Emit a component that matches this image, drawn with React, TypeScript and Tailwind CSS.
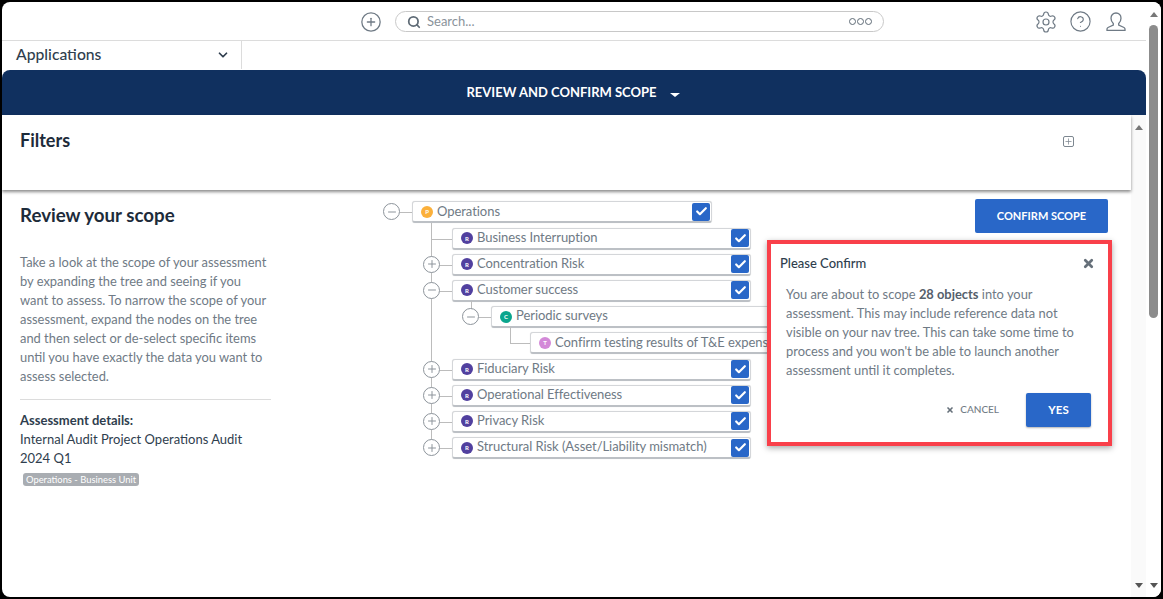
import { Search, Settings, CircleHelp, ChevronDown, Check, X, CirclePlus, Plus, Minus } from 'lucide-react';

type Node = {
  label: string;
  letter: string;
  color: string;
  depth: number;
  toggle?: 'plus' | 'minus';
  last?: boolean;
};

const nodes: Node[] = [
  { label: 'Operations', letter: 'P', color: 'bg-[#fbb03b]', depth: 0, toggle: 'minus' },
  { label: 'Business Interruption', letter: 'R', color: 'bg-[#51409f]', depth: 1 },
  { label: 'Concentration Risk', letter: 'R', color: 'bg-[#51409f]', depth: 1, toggle: 'plus' },
  { label: 'Customer success', letter: 'R', color: 'bg-[#51409f]', depth: 1, toggle: 'minus' },
  { label: 'Periodic surveys', letter: 'C', color: 'bg-[#0ba58d]', depth: 2, toggle: 'minus' },
  { label: 'Confirm testing results of T&E expenses', letter: 'T', color: 'bg-[#d389d8]', depth: 3 },
  { label: 'Fiduciary Risk', letter: 'R', color: 'bg-[#51409f]', depth: 1, toggle: 'plus' },
  { label: 'Operational Effectiveness', letter: 'R', color: 'bg-[#51409f]', depth: 1, toggle: 'plus' },
  { label: 'Privacy Risk', letter: 'R', color: 'bg-[#51409f]', depth: 1, toggle: 'plus' },
  { label: 'Structural Risk (Asset/Liability mismatch)', letter: 'R', color: 'bg-[#51409f]', depth: 1, toggle: 'plus', last: true },
];

const depthPad = ['pl-0', 'pl-[40px]', 'pl-[79px]', 'pl-[118px]'];
const togglePos = ['left-[-29px]', 'left-[11px]', 'left-[50px]', 'left-[89px]'];
const stubPos = ['left-[-12px]', 'left-[28px]', 'left-[67px]', 'left-[106px]'];

const TreeRow = ({ node }: { node: Node }) => (
  <div className={`relative flex h-[22px] ${depthPad[node.depth]}`}>
    {/* connector lines */}
    {node.depth >= 1 && (
      <span className={`absolute left-[19px] top-[-5px] w-px bg-[#bcbcbc] ${node.last ? 'h-[16px]' : 'h-[31px]'}`} />
    )}
    {node.depth === 2 && <span className="absolute left-[59px] top-[-5px] h-[8px] w-px bg-[#bcbcbc]" />}
    {node.depth === 3 && (
      <span className="absolute left-[98px] top-[-5px] h-[17px] w-[20px] border-b border-l border-[#bcbcbc]" />
    )}
    {node.depth === 1 && !node.toggle && (
      <span className="absolute left-[19px] top-[11px] h-px w-[21px] bg-[#bcbcbc]" />
    )}
    {node.toggle && (
      <>
        <span className={`absolute top-[11px] h-px w-[12px] bg-[#bcbcbc] ${stubPos[node.depth]}`} />
        <span
          className={`absolute top-[2px] flex h-[17px] w-[17px] items-center justify-center rounded-full border-[1.5px] border-[#8d949b] bg-white text-[#8d949b] ${togglePos[node.depth]}`}
        >
          {node.toggle === 'plus' ? <Plus size={12} strokeWidth={2} /> : <Minus size={12} strokeWidth={2} />}
        </span>
      </>
    )}
    <div
      className={`relative flex h-[22px] shrink-0 items-center rounded-[3px] border border-b-2 border-[#d4d6d9] border-b-[#bcc0c5] bg-white pl-[8px] pr-px shadow-[0_0_1px_rgba(0,0,0,0.15)] ${
        node.depth === 0 ? 'w-[300px]' : 'w-[299px]'
      }`}
    >
      <span className={`mr-[4px] flex h-[12px] w-[12px] shrink-0 items-center justify-center rounded-full text-[6px] font-bold text-white ${node.color}`}>
        {node.letter}
      </span>
      <span className="flex-1 overflow-hidden whitespace-nowrap pb-px text-[13px] tracking-[-0.05px] text-[#6f7a85]">{node.label}</span>
      <span className="ml-1 flex h-[18px] w-[18px] shrink-0 items-center justify-center rounded-[2px] bg-[#2967c8] text-white">
        <Check size={13} strokeWidth={4} />
      </span>
    </div>
  </div>
);

const ArrowUp = ({ className = '' }: { className?: string }) => (
  <span className={`h-0 w-0 border-x-[4px] border-b-[5px] border-x-transparent border-b-[#777] ${className}`} />
);

const ArrowDown = ({ className = '' }: { className?: string }) => (
  <span className={`h-0 w-0 border-x-[4px] border-t-[5px] border-x-transparent border-t-[#555] ${className}`} />
);

const UserIcon = () => (
  <svg width="20" height="20" viewBox="0 0 20 20" fill="none" stroke="#6f7a85" strokeWidth="1.3">
    <path d="M10 1c3 0 5 2.200 5 5.200 0 2.300-1 4-2.300 5.300v1.500l5.300 2.500c.7.400 1 1 1 1.500v1.300H1v-1.300c0-.5.300-1.100 1-1.500L7.300 13v-1.500C6 10.200 5 8.500 5 6.200 5 3.200 7 1 10 1z" />
  </svg>
);

export default function App() {
  return (
    <div className="h-[599px] w-[1163px] overflow-hidden bg-black p-[2px] font-['Lato','Liberation_Sans',sans-serif]">
      <div className="flex h-[595px] overflow-hidden rounded-[8px] bg-white">
        <div className="flex min-w-0 flex-1 flex-col">
          {/* Top bar */}
          <header className="flex h-[39px] shrink-0 items-center border-b border-[#dcdcdc] pl-[358px] pt-[1px]">
            <CirclePlus size={22} strokeWidth={1.4} className="text-[#6f7a85]" />
            <div className="ml-[13px] flex h-[21px] w-[489px] items-center rounded-full border border-[#c8c8c8] pl-[11px] pr-[11px]">
              <Search size={14} strokeWidth={3} className="text-[#5f6b76]" />
              <span className="ml-[6px] flex-1 text-[13px] text-[#8a939b]">Search...</span>
              <span className="flex gap-px">
                <span className="h-[7px] w-[7px] rounded-full border border-[#5f6b76]" />
                <span className="h-[7px] w-[7px] rounded-full border border-[#5f6b76]" />
                <span className="h-[7px] w-[7px] rounded-full border border-[#5f6b76]" />
              </span>
            </div>
            <div className="ml-[150px] flex items-center gap-[11px]">
              <Settings size={24} strokeWidth={1.2} className="text-[#6f7a85]" />
              <CircleHelp size={23} strokeWidth={1.2} className="text-[#6f7a85]" />
              <span className="ml-[3px]"><UserIcon /></span>
            </div>
          </header>

          {/* Applications */}
          <div className="h-[29px] shrink-0">
            <div className="flex h-[28px] w-[240px] items-center justify-between border-r border-[#dcdcdc] pl-[14px] pr-[11px]">
              <span className="text-[15.7px] font-medium text-[#2f3e4e]">Applications</span>
              <ChevronDown size={14} strokeWidth={3} className="text-[#2f3e4e]" />
            </div>
          </div>

          {/* Nav band */}
          <div className="flex h-[45px] shrink-0 items-center justify-center gap-[13px] rounded-t-[8px] bg-[#10305f] pr-[2px]">
            <span className="text-[13px] font-bold text-white">REVIEW AND CONFIRM SCOPE</span>
            <span className="mt-[5px] h-0 w-0 border-x-[5px] border-t-[4px] border-x-transparent border-t-white" />
          </div>

          {/* Body */}
          <div className="flex min-h-0 flex-1">
            <div className="relative min-w-0 flex-1">
              <section className="relative z-10 flex h-[75px] justify-between bg-white pl-[18px] pr-[57px] pt-[15px] shadow-[0_2px_3px_rgba(0,0,0,0.45)]">
                <h2 className="text-[18px] font-bold leading-[21px] text-[#1d2b3a]">Filters</h2>
                <span className="mt-[6px] flex h-[11px] w-[11px] items-center justify-center rounded-[2px] border border-[#7d8790] text-[#7d8790]">
                  <Plus size={9} strokeWidth={2} />
                </span>
              </section>

              <div className="flex pl-[18px] pt-[11px]">
                {/* Left column */}
                <div className="w-[251px] shrink-0">
                  <h2 className="pt-[2px] text-[18.7px] font-bold leading-[24px] text-[#1d2b3a]">Review your scope</h2>
                  <p className="mt-[26px] text-[12.9px] leading-[19px] text-[#6f7a85]">
                    Take a look at the scope of your assessment by expanding the tree and seeing if you want to assess. To narrow the scope of your assessment, expand the nodes on the tree and then select or de-select specific items until you have exactly the data you want to assess selected.
                  </p>
                  <div className="mt-[13px] border-t border-[#dcdcdc] pt-[11px] text-[13px] leading-[19px] text-[#2f3e4e]">
                    <div className="font-bold">Assessment details:</div>
                    <div>Internal Audit Project Operations Audit 2024 Q1</div>
                    <span className="ml-[3px] mt-[5px] inline-block rounded-[3px] bg-[#a9adb2] px-[3px] align-top text-[9.4px] leading-[13px] text-white">
                      Operations - Business Unit
                    </span>
                  </div>
                </div>

                {/* Tree */}
                <div className="ml-[141px] mt-[0.4px] flex flex-col gap-[4.2px] self-start">
                  {nodes.map((node) => (
                    <TreeRow key={node.label} node={node} />
                  ))}
                </div>

                <button className="absolute left-[973px] top-[84px] h-[34px] w-[133px] rounded-[2px] bg-[#2967c8] text-[11px] font-bold text-white">
                  CONFIRM SCOPE
                </button>
              </div>

              {/* Popover with the red highlight */}
              <div className="absolute left-[765px] top-[125px] z-20 h-[206px] w-[345px] border-[4px] border-[#f9404a] bg-white shadow-[0_2px_6px_rgba(0,0,0,0.35)]">
                <div className="flex items-center justify-between pl-[9px] pr-[13px] pt-[10px]">
                  <span className="text-[13px] font-medium text-[#2f3e4e]">Please Confirm</span>
                  <X size={13} strokeWidth={5} className="text-[#66707a]" />
                </div>
                <p className="ml-[15px] mt-[11px] w-[300px] text-[12.9px] leading-[19px] text-[#6f7a85]">
                  You are about to scope <b className="text-[#55606b]">28 objects</b> into your assessment. This may include reference data not visible on your nav tree. This can take some time to process and you won't be able to launch another assessment until it completes.
                </p>
                <div className="mr-[17px] mt-[13px] flex items-center justify-end">
                  <X size={8} strokeWidth={5} className="text-[#66707a]" />
                  <span className="ml-[6px] text-[10px] font-medium text-[#727c86]">CANCEL</span>
                  <button className="ml-[27px] h-[34px] w-[65px] rounded-[2px] bg-[#2967c8] text-[11.5px] font-bold text-white shadow-[0_1px_2px_rgba(0,0,0,0.3)]">
                    YES
                  </button>
                </div>
              </div>
            </div>

            {/* Inner scrollbar */}
            <div className="flex w-[15px] shrink-0 flex-col items-center justify-between bg-[#fafafa] pb-[9px] pt-[10px]">
              <ArrowUp />
              <ArrowDown />
            </div>
          </div>
        </div>

        {/* Outer scrollbar */}
        <div className="flex w-[15px] shrink-0 flex-col items-center bg-white pb-[9px] pt-[10px]">
          <ArrowUp className="border-b-[#8a8a8a]" />
          <span className="mt-[8px] h-[293px] w-[9px] rounded-full bg-[#8c8c8c]" />
          <span className="flex-1" />
          <ArrowDown />
        </div>
      </div>
    </div>
  );
}
